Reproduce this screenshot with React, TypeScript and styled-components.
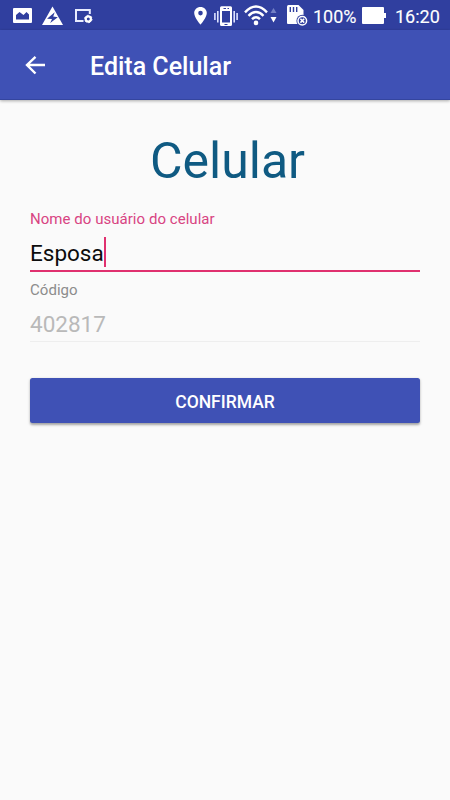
import React from "react";
import styled, { createGlobalStyle } from "styled-components";

const GlobalStyle = createGlobalStyle`
  * { box-sizing: border-box; }
  body { margin: 0; background: #fafafa; font-family: Roboto, "Liberation Sans", sans-serif; }
`;

const Screen = styled.div`
  height: 800px;
  display: flex;
  flex-direction: column;
  background: #fafafa;
`;

const StatusBar = styled.div`
  height: 30px;
  flex: none;
  padding: 0 10px 0 13px;
  display: flex;
  justify-content: space-between;
  background: #303f9f;
`;

const IconGroup = styled.div`
  display: flex;
  align-items: center;
`;

const StatusIcon = styled.svg<{ $gap?: number }>`
  display: block;
  flex: none;
  height: 30px;
  margin-left: ${(p) => p.$gap ?? 0}px;
`;

const StatusText = styled.span<{ $width: number; $gap: number }>`
  width: ${(p) => p.$width}px;
  margin-left: ${(p) => p.$gap}px;
  padding-top: 3px;
  font-size: 18px;
  line-height: 27px;
  color: #fff;
  -webkit-text-stroke: 0.12px #fff;
  white-space: nowrap;
`;

const Toolbar = styled.header`
  height: 70px;
  flex: none;
  display: flex;
  align-items: center;
  gap: 44px;
  padding: 2px 25px 0;
  background: #3f51b5;
  box-shadow: inset 0 -1px #34459f, 0 1px 3px rgba(0, 0, 0, 0.32);
`;

const BackButton = styled.button`
  display: flex;
  padding: 0;
  border: 0;
  background: none;
`;

const Title = styled.h1`
  margin: 0;
  padding-top: 2px;
  font-size: 25px;
  font-weight: 500;
  line-height: 30px;
  color: #fff;
`;

const Form = styled.main`
  display: flex;
  flex-direction: column;
  padding: 30px 30px 0;
`;

const Heading = styled.h2`
  margin: 0 0 18px;
  padding-left: 5px;
  text-align: center;
  font-size: 50px;
  font-weight: 400;
  line-height: 62px;
  color: #0f5a82;
`;

const Field = styled.div<{ $active?: boolean }>`
  display: flex;
  flex-direction: column;
  height: 62px;
  margin-bottom: ${(p) => (p.$active ? 8 : 36)}px;
  border-bottom: ${(p) => (p.$active ? "2px solid #e0306f" : "1px solid #eeeeee")};
`;

const Label = styled.span<{ $active?: boolean }>`
  padding-top: ${(p) => (p.$active ? 0 : 1)}px;
  font-size: 15px;
  letter-spacing: 0.04px;
  line-height: 18px;
  color: ${(p) => (p.$active ? "#d84482" : "#8c8c8c")};
`;

const Value = styled.span`
  display: flex;
  height: 32px;
  margin-top: 8px;
  font-size: 22.5px;
  line-height: 35px;
  color: #b9b9b9;
`;

const ActiveValue = styled(Value)`
  color: #0c0c0c;
`;

const Caret = styled.i`
  width: 2.5px;
  height: 30px;
  margin-top: 1px;
  background: #e0306f;
`;

const Confirm = styled.button`
  height: 45px;
  padding: 2px 0 0;
  border: 0;
  border-radius: 2.5px;
  background: #3f51b5;
  box-shadow: 0 1.5px 2.5px rgba(0, 0, 0, 0.35);
  color: #fff;
  font-family: inherit;
  font-size: 17.5px;
  font-weight: 500;
`;

export default function App() {
  return (
    <Screen>
      <GlobalStyle />
      <StatusBar>
        <IconGroup>
          <StatusIcon width="19" viewBox="0 0 19 30">
            <path fill="#fff" fillRule="evenodd" d="M1 8H18Q19 8 19 9V22Q19 23 18 23H1Q0 23 0 22V9Q0 8 1 8ZM3 19.5H16V14.5L13.5 12L10.5 15L6.5 12L3 15Z" />
          </StatusIcon>
          <StatusIcon width="21" viewBox="0 0 21 30" $gap={10}>
            <path fill="#fff" d="M10.5 6.5L21 25H0Z" />
            <path fill="#303f9f" d="M12.7 12.2L5 18.7L10 19L8.2 23L15.8 17.2L11.2 16.5Z" />
          </StatusIcon>
          <StatusIcon width="19" viewBox="0 0 19 30" $gap={11}>
            <path fill="none" stroke="#e8ecff" strokeWidth="2" d="M9.5 21H2V10H15.8V14" />
            <circle cx="14.3" cy="19" r="2.6" fill="none" stroke="#fff" strokeWidth="2.2" />
            <circle cx="14.3" cy="19" r="3.7" fill="none" stroke="#fff" strokeWidth="1" strokeDasharray="1.8 2.1" />
          </StatusIcon>
        </IconGroup>
        <IconGroup>
          <StatusIcon width="13" viewBox="0 0 13 30">
            <path fill="#fff" fillRule="evenodd" d="M6.5 7C2.9 7 .2 9.7 .2 13.1C.2 17.8 6.5 24.7 6.5 24.7S12.8 17.8 12.8 13.1C12.8 9.7 10.1 7 6.5 7ZM6.5 10.8A2.3 2.3 0 1 1 6.5 15.4A2.3 2.3 0 1 1 6.5 10.8Z" />
          </StatusIcon>
          <StatusIcon width="24" viewBox="0 0 24 30" $gap={7}>
            <path fill="#fff" fillRule="evenodd" d="M7.5 6.2H16.5Q18 6.2 18 7.7V24.5Q18 26 16.5 26H7.5Q6 26 6 24.5V7.7Q6 6.2 7.5 6.2ZM8 11V22.5H16V11ZM9.5 8V9H12V8ZM13.5 8V9H15V8ZM10.5 24V25H13.5V24Z" />
            <path stroke="#dce2ff" strokeWidth="1.6" d="M.9 13V20M3.8 11V22.5M20.2 11V22.5M23.1 13V20" />
          </StatusIcon>
          <StatusIcon width="33" viewBox="0 0 33 30" $gap={6}>
            <g fill="none" stroke="#fff" strokeWidth="2.4">
              <path d="M1 12.3Q12 .8 23 12.3" />
              <path d="M4.5 15.8Q12 8.2 19.5 15.8" />
              <path d="M8 19.2Q12 15.2 16 19.2" />
            </g>
            <circle cx="12" cy="22.9" r="2.3" fill="#fff" />
            <path fill="#7380c5" d="M26.5 13L29.5 8L32.5 13Z" />
            <path fill="#fff" d="M26.5 17H32.5L29.5 22.5Z" />
          </StatusIcon>
          <StatusIcon width="21" viewBox="0 0 21 30" $gap={10}>
            <path fill="#fff" d="M1.5 5H11.5L16.5 10V24H1Q0 24 0 23V6.5Q0 5 1.5 5Z" />
            <path stroke="#303f9f" strokeWidth="1.4" d="M3.3 7V12M6.5 7V12M9.7 7V12" />
            <circle cx="15.3" cy="20.7" r="5.9" fill="#303f9f" />
            <circle cx="15.3" cy="20.7" r="4.3" fill="#303f9f" stroke="#fff" strokeWidth="1.5" />
            <path stroke="#fff" strokeWidth="1.5" d="M13.4 18.8L17.2 22.6M17.2 18.8L13.4 22.6" />
          </StatusIcon>
          <StatusText $width={43} $gap={5}>100%</StatusText>
          <StatusIcon width="24" viewBox="0 0 24 30" $gap={6}>
            <path fill="#fff" d="M1 7H21Q22 7 22 8V13H24V18H22V23Q22 24 21 24H1Q0 24 0 23V8Q0 7 1 7Z" />
          </StatusIcon>
          <StatusText $width={45} $gap={9}>16:20</StatusText>
        </IconGroup>
      </StatusBar>
      <Toolbar>
        <BackButton aria-label="Voltar">
          <svg width="21" height="20" viewBox="0 0 21 20" fill="none" stroke="#fff" strokeWidth="2.4">
            <path d="M20 9H2.5M10.5.9L2 9L10.5 17.5" />
          </svg>
        </BackButton>
        <Title>Edita Celular</Title>
      </Toolbar>
      <Form>
        <Heading>Celular</Heading>
        <Field $active>
          <Label $active>Nome do usuário do celular</Label>
          <ActiveValue>Esposa<Caret /></ActiveValue>
        </Field>
        <Field>
          <Label>Código</Label>
          <Value as="span">402817</Value>
        </Field>
        <Confirm>CONFIRMAR</Confirm>
      </Form>
    </Screen>
  );
}
